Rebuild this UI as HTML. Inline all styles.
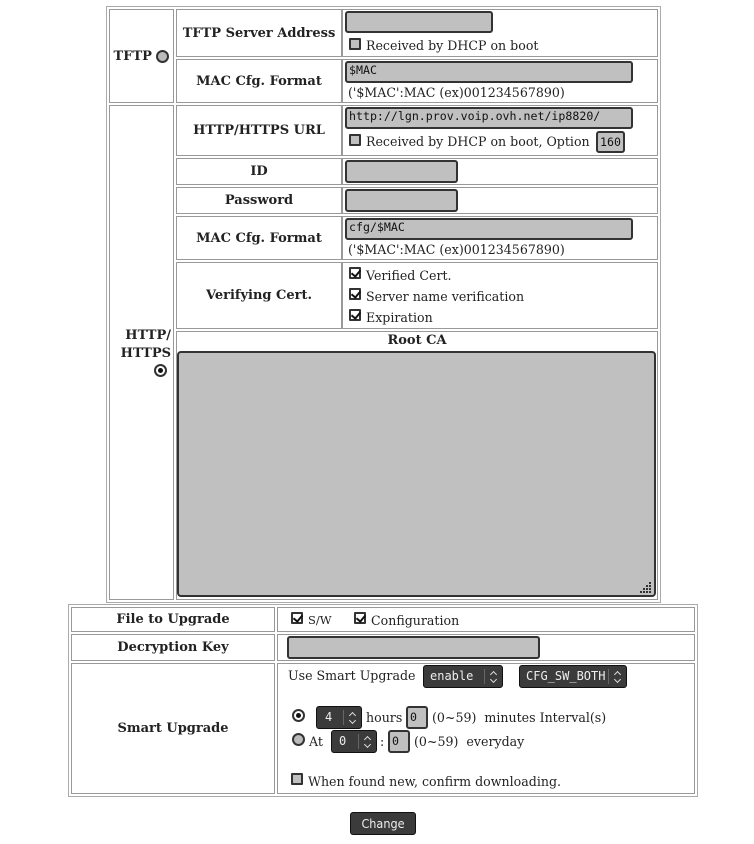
<!DOCTYPE html>
<html><head><meta charset="utf-8"><style>
*{box-sizing:border-box}
body{margin:0;background:#fff;width:754px;height:844px;position:relative;font-family:"DejaVu Serif","Liberation Serif",serif;font-size:12.6px;color:#222;overflow:hidden}
.b{position:absolute;border:1px solid #999}
.o{position:absolute;border:1px solid #aaa;box-shadow:inset 0 0 0 1px #fff}
.l{display:flex;align-items:center;justify-content:center;font-weight:bold;font-size:13px;text-align:center}
.in{position:absolute;background:#c0c0c0;border:2px solid #333;border-radius:3px;font-family:"DejaVu Sans Mono",monospace;font-size:11.6px;padding:0 0 0 2px;line-height:15px;color:#111}
.t{position:absolute;white-space:nowrap}
.cb{position:absolute;width:12px;height:12px;border:2px solid #333;background:#c0c0c0;border-radius:1px}
.cb.k{background:#fff}
.cb.k:after{content:"";position:absolute;left:2px;top:-1px;width:4px;height:7px;border:solid #111;border-width:0 2px 2px 0;transform:rotate(40deg)}
.rd{position:absolute;width:13px;height:13px;border-radius:50%;border:2px solid #333;background:#bbb}
.rd.k{background:#fff}
.rd.k:after{content:"";position:absolute;left:2px;top:2px;width:5px;height:5px;border-radius:50%;background:#111}
.sel{position:absolute;background:#3b3b3b;border:1px solid #111;border-radius:3px;color:#eee;font-family:"DejaVu Sans Mono",monospace;font-size:12px;line-height:21px;padding-left:6px}
.sel i{position:absolute;right:0;top:3px;bottom:3px;width:18px;border-left:1px solid #666}
.sel i:before{content:"";position:absolute;left:6px;top:3px;width:4px;height:4px;border:solid #ddd;border-width:1.5px 0 0 1.5px;transform:rotate(45deg)}
.sel i:after{content:"";position:absolute;left:6px;top:8px;width:4px;height:4px;border:solid #ddd;border-width:0 1.5px 1.5px 0;transform:rotate(45deg)}
</style></head><body>
<div class="o" style="left:106px;top:6px;width:555px;height:597px"></div>
<div class="b l" style="left:109px;top:9px;width:65px;height:94px">TFTP&nbsp;<span style="display:inline-block;width:13px;height:13px;border-radius:50%;border:2px solid #333;background:#bbb"></span></div>
<div class="b l" style="left:176px;top:9px;width:166px;height:48px">TFTP Server Address</div>
<div class="b" style="left:342px;top:9px;width:316px;height:48px"></div>
<div class="in" style="left:345px;top:11px;width:148px;height:22px"></div>
<div class="cb" style="left:349px;top:38px"></div><div class="t" style="left:366px;top:38px">Received by DHCP on boot</div>
<div class="b l" style="left:176px;top:59px;width:166px;height:44px">MAC Cfg. Format</div>
<div class="b" style="left:342px;top:59px;width:316px;height:44px"></div>
<div class="in" style="left:345px;top:61px;width:288px;height:22px">$MAC</div>
<div class="t" style="left:348px;top:85px">('$MAC':MAC (ex)001234567890)</div>

<div class="b" style="left:109px;top:105px;width:65px;height:495px"></div>
<div class="t" style="left:111px;top:327px;font-weight:bold;font-size:13px;line-height:18px;text-align:right;width:60px">HTTP/<br>HTTPS</div>
<div class="rd k" style="left:154px;top:364px"></div>
<div class="b l" style="left:176px;top:105px;width:166px;height:51px">HTTP/HTTPS URL</div>
<div class="b" style="left:342px;top:105px;width:316px;height:51px"></div>
<div class="in" style="left:345px;top:107px;width:288px;height:22px">http://lgn.prov.voip.ovh.net/ip8820/</div>
<div class="cb" style="left:349px;top:134px"></div><div class="t" style="left:366px;top:134px">Received by DHCP on boot, Option</div>
<div class="in" style="left:596px;top:131px;width:29px;height:22px;line-height:18px">160</div>
<div class="b l" style="left:176px;top:158px;width:166px;height:27px">ID</div>
<div class="b" style="left:342px;top:158px;width:316px;height:27px"></div>
<div class="in" style="left:345px;top:160px;width:113px;height:23px"></div>
<div class="b l" style="left:176px;top:187px;width:166px;height:27px">Password</div>
<div class="b" style="left:342px;top:187px;width:316px;height:27px"></div>
<div class="in" style="left:345px;top:189px;width:113px;height:23px"></div>
<div class="b l" style="left:176px;top:216px;width:166px;height:44px">MAC Cfg. Format</div>
<div class="b" style="left:342px;top:216px;width:316px;height:44px"></div>
<div class="in" style="left:345px;top:218px;width:288px;height:22px">cfg/$MAC</div>
<div class="t" style="left:348px;top:242px">('$MAC':MAC (ex)001234567890)</div>
<div class="b l" style="left:176px;top:262px;width:166px;height:67px">Verifying Cert.</div>
<div class="b" style="left:342px;top:262px;width:316px;height:67px"></div>
<div class="cb k" style="left:349px;top:267px"></div><div class="t" style="left:366px;top:268px">Verified Cert.</div>
<div class="cb k" style="left:349px;top:288px"></div><div class="t" style="left:366px;top:289px">Server name verification</div>
<div class="cb k" style="left:349px;top:309px"></div><div class="t" style="left:366px;top:310px">Expiration</div>
<div class="b" style="left:176px;top:331px;width:482px;height:269px"></div>
<div class="t" style="left:176px;top:333px;width:482px;text-align:center;font-weight:bold;font-size:13px">Root CA</div>
<div class="in" style="left:177px;top:351px;width:479px;height:246px;border-radius:4px"></div>
<svg style="position:absolute;left:640px;top:582px" width="12" height="12"><g fill="#333"><rect x="9" y="0" width="2" height="2"/><rect x="6" y="3" width="2" height="2"/><rect x="9" y="3" width="2" height="2"/><rect x="3" y="6" width="2" height="2"/><rect x="6" y="6" width="2" height="2"/><rect x="9" y="6" width="2" height="2"/><rect x="0" y="9" width="2" height="2"/><rect x="3" y="9" width="2" height="2"/><rect x="6" y="9" width="2" height="2"/><rect x="9" y="9" width="2" height="2"/></g></svg>

<div class="o" style="left:68px;top:604px;width:630px;height:193px"></div>
<div class="b l" style="left:71px;top:607px;width:204px;height:25px">File to Upgrade</div>
<div class="b" style="left:277px;top:607px;width:418px;height:25px"></div>
<div class="cb k" style="left:291px;top:612px"></div><div class="t" style="left:308px;top:613px;font-size:11.5px">S/W</div>
<div class="cb k" style="left:354px;top:612px"></div><div class="t" style="left:371px;top:613px">Configuration</div>
<div class="b l" style="left:71px;top:634px;width:204px;height:27px">Decryption Key</div>
<div class="b" style="left:277px;top:634px;width:418px;height:27px"></div>
<div class="in" style="left:287px;top:636px;width:253px;height:23px"></div>
<div class="b l" style="left:71px;top:663px;width:204px;height:131px">Smart Upgrade</div>
<div class="b" style="left:277px;top:663px;width:418px;height:131px"></div>
<div class="t" style="left:288px;top:668px">Use Smart Upgrade</div>
<div class="sel" style="left:423px;top:665px;width:80px;height:23px">enable<i></i></div>
<div class="sel" style="left:519px;top:665px;width:108px;height:23px">CFG_SW_BOTH<i></i></div>
<div class="rd k" style="left:292px;top:709px"></div>
<div class="sel" style="left:316px;top:706px;width:46px;height:23px;padding-left:8px">4<i></i></div>
<div class="t" style="left:366px;top:710px">hours</div>
<div class="in" style="left:406px;top:706px;width:22px;height:23px;line-height:19px">0</div>
<div class="t" style="left:432px;top:710px">(0~59)&nbsp; minutes Interval(s)</div>
<div class="rd" style="left:292px;top:733px"></div>
<div class="t" style="left:309px;top:734px">At</div>
<div class="sel" style="left:331px;top:730px;width:46px;height:23px;padding-left:7px">0<i></i></div>
<div class="t" style="left:380px;top:734px">:</div>
<div class="in" style="left:388px;top:730px;width:22px;height:23px;line-height:19px">0</div>
<div class="t" style="left:414px;top:734px">(0~59)&nbsp; everyday</div>
<div class="cb" style="left:291px;top:773px"></div><div class="t" style="left:308px;top:774px">When found new, confirm downloading.</div>

<div style="position:absolute;left:350px;top:812px;width:66px;height:23px;background:#3b3b3b;border:1px solid #111;border-radius:3px;color:#eee;font-family:'DejaVu Sans Condensed','DejaVu Sans',sans-serif;font-size:12.5px;text-align:center;line-height:21px">Change</div>
</body></html>
